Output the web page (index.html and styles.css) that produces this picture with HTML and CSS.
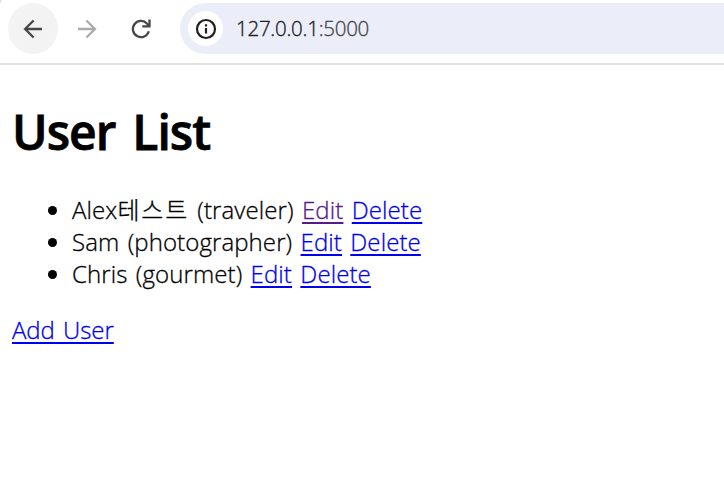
FILE: index.html
```
<!DOCTYPE html>
<html lang="en">
<head>
<meta charset="utf-8">
<title>User List</title>
<link rel="stylesheet" href="styles.css">
</head>
<body>
<header class="toolbar">
  <span class="tab-corner"></span>
  <button class="nav-button active" aria-label="Back">
    <svg width="24" height="24" viewBox="0 0 24 24"><path d="M21 12H4.4M12.6 3.5 4.1 12l8.5 8.5"/></svg>
  </button>
  <button class="nav-button forward" aria-label="Forward">
    <svg width="24" height="24" viewBox="0 0 24 24"><path d="M3 12h16.6M11.400 3.500 19.900 12l-8.500 8.500"/></svg>
  </button>
  <button class="nav-button" aria-label="Reload">
    <svg width="24" height="24" viewBox="0 0 24 24"><path d="M19.800 14.200A8.100 8.100 0 1 1 17.900 6.500L20 8.600"/><path d="M20.500 2.500V9.400H13.300"/></svg>
  </button>
  <div class="address">
    <span class="site-info">
      <svg width="24" height="24" viewBox="0 0 24 24"><circle cx="12" cy="12" r="9"/><path d="M12 11v5.500M12 7.200v2.200"/></svg>
    </span>
    <span class="url"><span class="host">127.0.0.1</span>:5000</span>
  </div>
</header>
<main>
  <h1>User List</h1>
  <ul>
    <li>Alex<span class="korean">테스트</span> (traveler) <a class="visited" href="#">Edit</a> <a href="#">Delete</a></li>
    <li>Sam (photographer) <a href="#">Edit</a> <a href="#">Delete</a></li>
    <li>Chris (gourmet) <a href="#">Edit</a> <a href="#">Delete</a></li>
  </ul>
  <a class="add" href="#">Add User</a>
</main>
</body>
</html>
```
FILE: styles.css
```
body {
  margin: 0;
  background: #fff;
  color: #000;
  font-family: "Open Sans", "Noto Sans CJK KR", sans-serif;
  font-size: 24px;
  line-height: 32px;
  overflow: hidden;
}
.toolbar {
  position: relative;
  box-sizing: border-box;
  height: 65px;
  padding: 3px 0 0 8px;
  border-bottom: 2px solid #e0e0e0;
  display: flex;
  align-items: flex-start;
  gap: 4px;
}
.tab-corner {
  position: absolute;
  left: 0;
  top: 0;
  width: 2px;
  height: 4px;
  background: #d3e3fd;
  clip-path: polygon(0 0, 100% 0, 0 100%);
}
.nav-button {
  width: 50px;
  height: 51px;
  padding: 0;
  border: 0;
  border-radius: 50%;
  background: none;
  display: flex;
  align-items: center;
  justify-content: center;
}
.nav-button.active { background: #f3f3f3; }
.nav-button svg {
  fill: none;
  stroke: #474747;
  stroke-width: 2.3;
}
.nav-button.forward svg { stroke: #ababab; }
.address {
  flex: 1;
  height: 51px;
  margin-left: 10px;
  padding-left: 8px;
  border-radius: 26px 0 0 26px;
  background: #ebeef8;
  display: flex;
  align-items: center;
}
.site-info {
  width: 35px;
  height: 35px;
  border-radius: 50%;
  background: #fff;
  display: flex;
  align-items: center;
  justify-content: center;
}
.site-info svg {
  fill: none;
  stroke: #1f1f1f;
  stroke-width: 2.2;
}
.url {
  margin: -2px 0 0 13px;
  font-size: 20.5px;
  font-weight: 300;
  letter-spacing: -0.25px;
  -webkit-text-stroke: 0.35px currentColor;
  color: #474747;
}
.host { color: #1f1f1f; }
main { padding: 0 12px; }
h1 {
  margin: 35px 0 30px;
  font-size: 48px;
  line-height: 64px;
  font-weight: 600;
  letter-spacing: -1px;
  word-spacing: 5.5px;
  -webkit-text-stroke: 0.8px currentColor;
}
ul {
  margin: 0 0 24px;
  padding-left: 60px;
}
li, .add {
  font-weight: 300;
  letter-spacing: 0.1px;
  word-spacing: 2px;
  -webkit-text-stroke: 0.3px currentColor;
}
.add { letter-spacing: -0.05px; }
.korean { letter-spacing: 1.8px; }
a {
  color: #0000ee;
  text-decoration-thickness: 2px;
  text-underline-offset: 3px;
  text-decoration-skip-ink: none;
}
a.visited { color: #551a8b; }
```
